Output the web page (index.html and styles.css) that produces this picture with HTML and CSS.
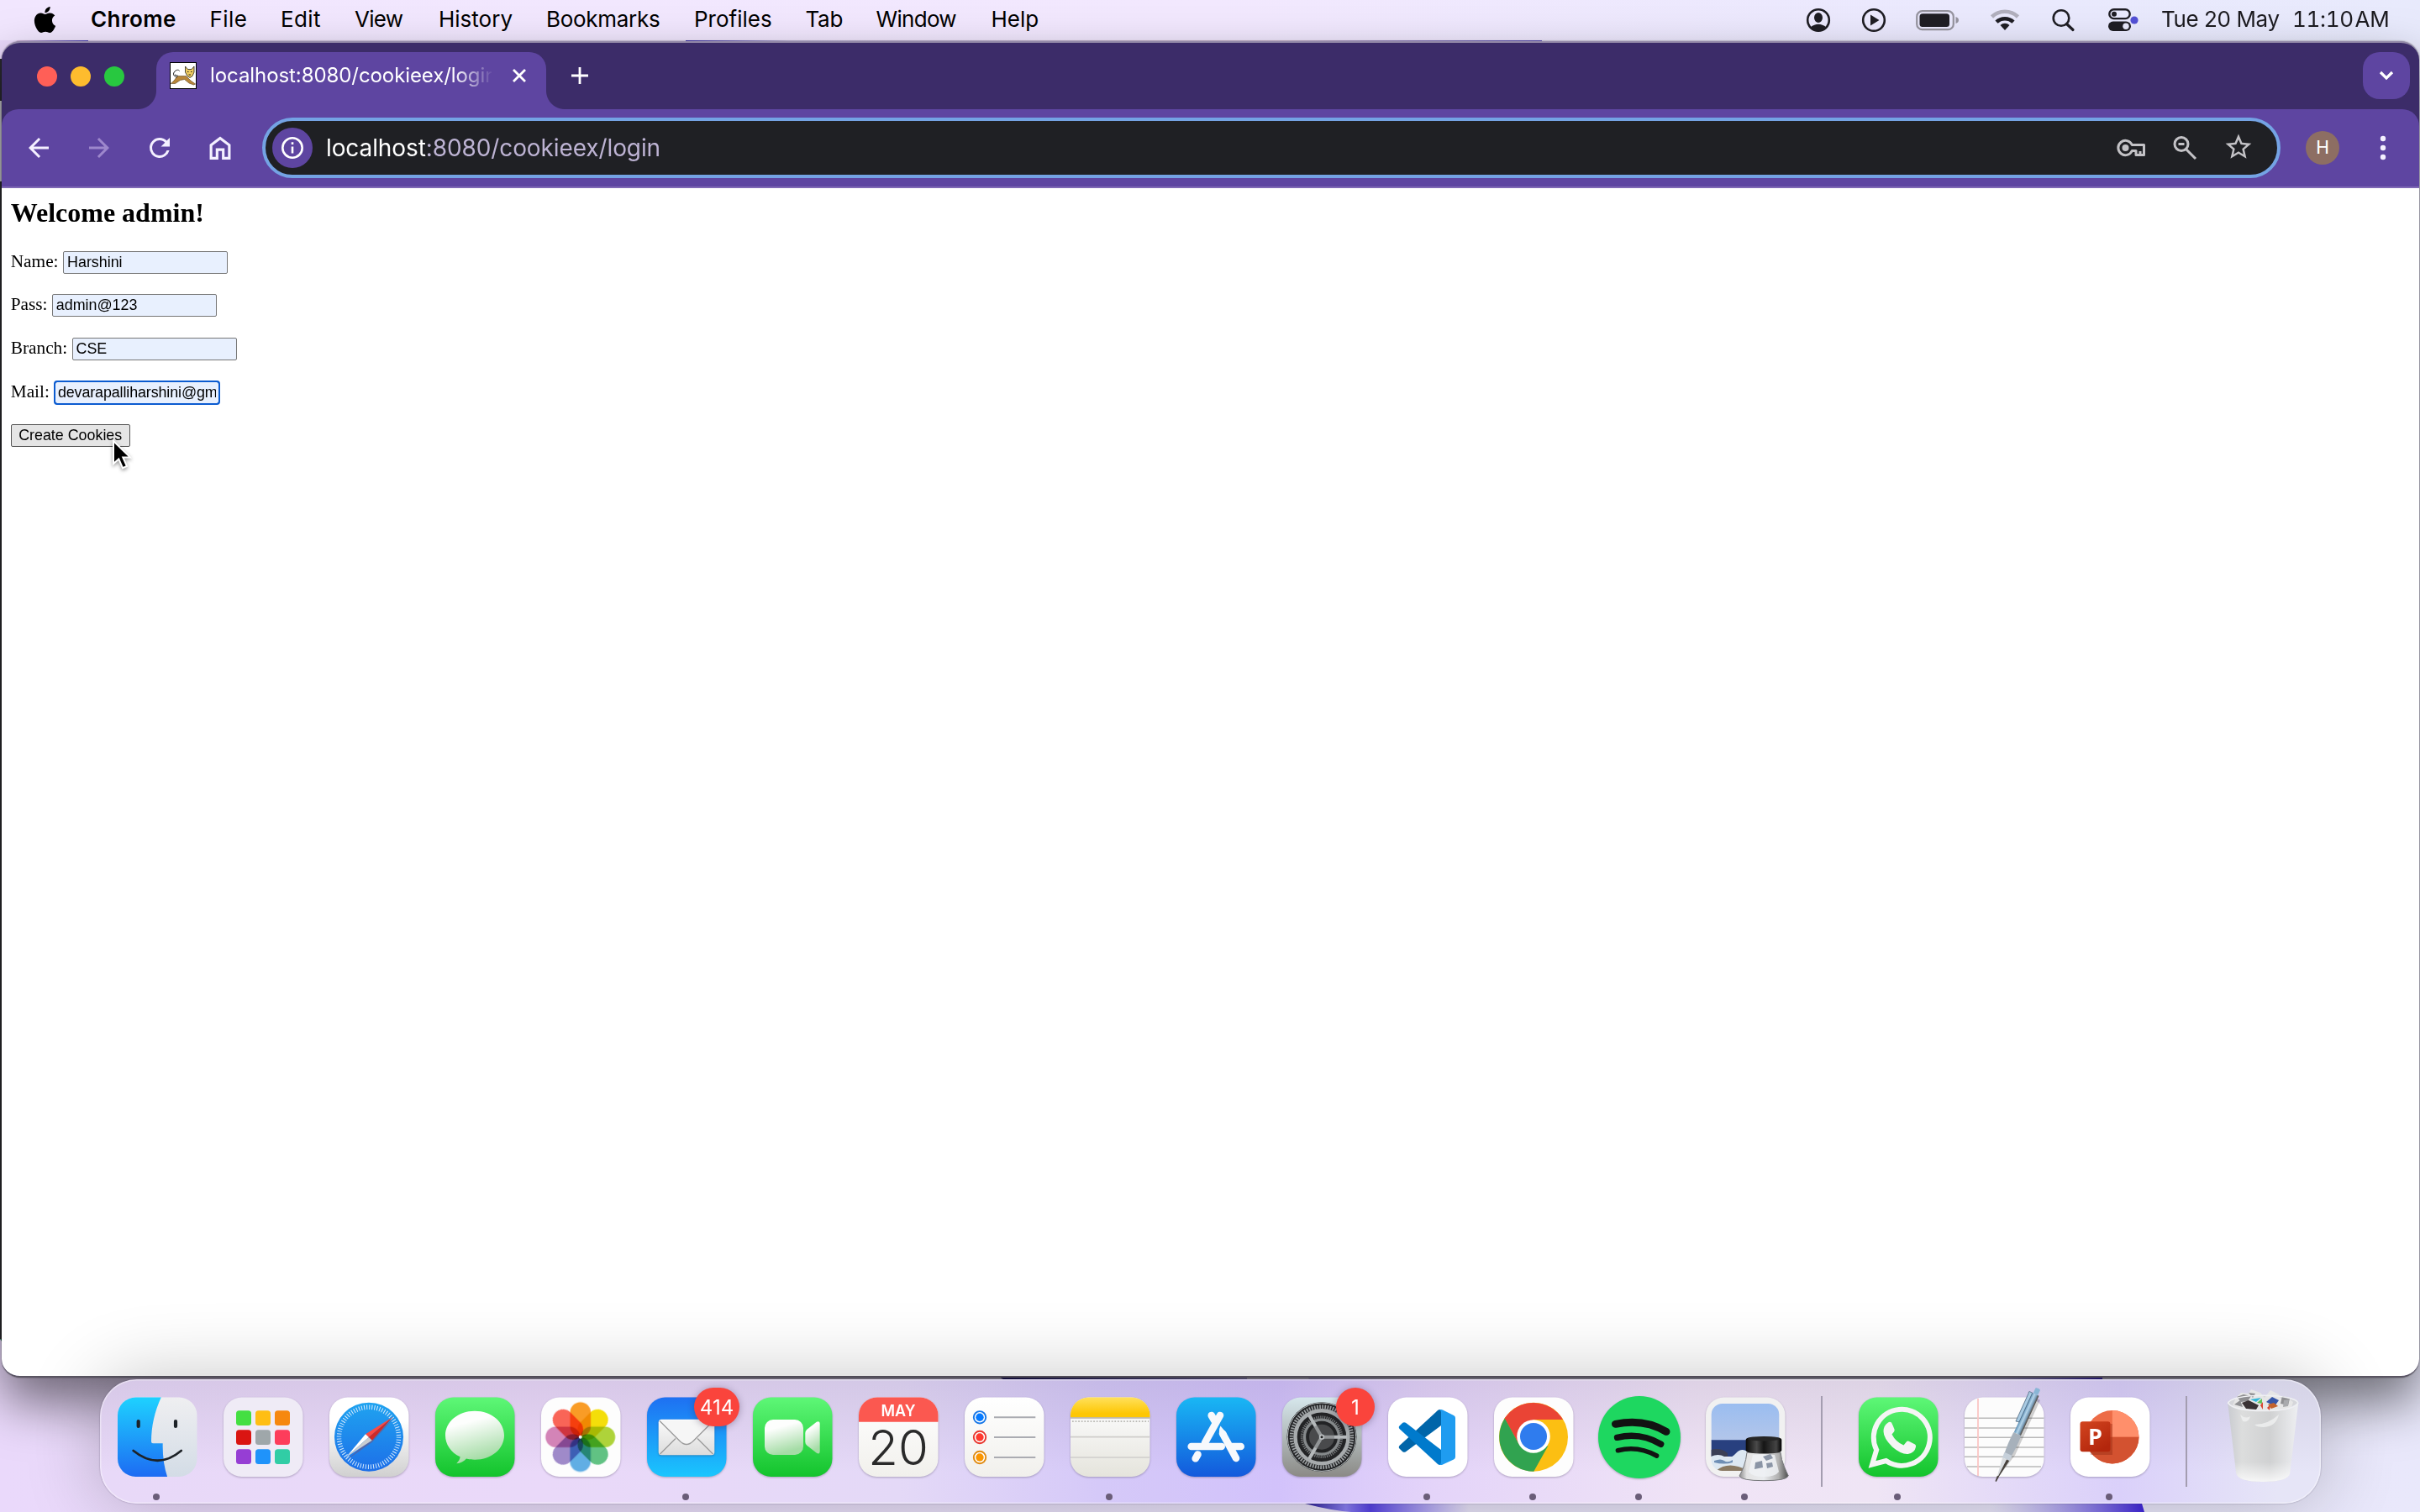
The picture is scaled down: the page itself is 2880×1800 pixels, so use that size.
FILE: index.html
```
<!DOCTYPE html>
<html lang="en">
<head>
<meta charset="utf-8">
<title>localhost:8080/cookieex/login</title>
<link rel="stylesheet" href="styles.css">
</head>
<body>
<svg class="wallpaper" viewBox="0 0 2880 1800">
  <defs>
    <linearGradient id="wp"><stop offset="0" stop-color="#ead9fb"/><stop offset=".5" stop-color="#e6dff6"/><stop offset="1" stop-color="#e9e8fb"/></linearGradient>
    <linearGradient id="w1"><stop offset="0" stop-color="#e2c2ea"/><stop offset="1" stop-color="#4a3fc4"/></linearGradient>
    <linearGradient id="w2"><stop offset="0" stop-color="#3c2fb4"/><stop offset=".12" stop-color="#c9bfe6"/><stop offset=".7" stop-color="#d9c3dd"/><stop offset="1" stop-color="#5d50c0"/></linearGradient>
    <linearGradient id="w3"><stop offset="0" stop-color="#2a1d96"/><stop offset=".25" stop-color="#8c80f4"/><stop offset=".4" stop-color="#5642e4"/><stop offset="1" stop-color="#7a68f8" stop-opacity="0"/></linearGradient>
    <linearGradient id="w4"><stop offset="0" stop-color="#9a8cf0" stop-opacity="0"/><stop offset="1" stop-color="#3f26dc"/></linearGradient>
    <linearGradient id="w5"><stop offset="0" stop-color="#1a1070"/><stop offset="1" stop-color="#4a3cc0" stop-opacity="0"/></linearGradient>
  </defs>
  <path fill="url(#wp)" d="M0 0h2880v1800H0z"/>
  <path fill="url(#w1)" d="M20 48h85v3H20z"/>
  <path fill="url(#w2)" d="M816 48h1019v3H816z"/>
  <path fill="#2a2a2e" d="M0 70h3v1524H0z"/>
  <path fill="#c9c9cb" d="M0 120h3v96H0z"/>
  <path fill="#1d6a4a" d="M0 1594h3v30q4 12 17 15l-9-30z"/>
  <path fill="url(#w3)" d="M1553 1790q30 8 55 10h140v-10z"/>
  <path fill="url(#w4)" d="M2370 1790h179l3 10h-182z"/>
  <path fill="url(#w5)" d="M1184 1636h300v6h-290zM1555 1636h120v6h-117z"/>
  <path fill="url(#w4)" d="M2330 1636h172v6h-172z"/>
</svg>

<header class="menubar">
  <svg class="apple" viewBox="0 0 24 24"><path d="M12.152 6.896c-.948 0-2.415-1.078-3.96-1.04-2.04.027-3.91 1.183-4.961 3.014-2.117 3.675-.546 9.103 1.519 12.09 1.013 1.454 2.208 3.09 3.792 3.039 1.52-.065 2.09-.987 3.935-.987 1.831 0 2.35.987 3.96.948 1.637-.026 2.676-1.48 3.676-2.948 1.156-1.688 1.636-3.325 1.662-3.415-.039-.013-3.182-1.221-3.22-4.857-.026-3.04 2.48-4.494 2.597-4.559-1.429-2.09-3.623-2.324-4.39-2.376-2-.156-3.675 1.09-4.61 1.09zM15.53 3.83c.843-1.012 1.4-2.427 1.245-3.83-1.207.052-2.662.805-3.532 1.818-.78.896-1.454 2.338-1.273 3.714 1.338.104 2.715-.688 3.559-1.701"/></svg>
  <nav class="menus">
    <span class="app-name">Chrome</span><span class="loose">File</span><span class="loose">Edit</span><span class="tight">View</span><span>History</span><span class="snug">Bookmarks</span><span>Profiles</span><span class="snug">Tab</span><span class="tight">Window</span><span>Help</span>
  </nav>
  <svg class="status" viewBox="0 0 430 48">
    <g fill="none" stroke="#1f1e24" stroke-width="2.6">
      <circle cx="24" cy="24" r="12.8"/><circle cx="90" cy="24" r="12.8"/>
      <circle cx="313" cy="21.500" r="9.300"/><path d="M319.500 28.500l7.500 7" stroke-width="3.200" stroke-linecap="round"/>
    </g>
    <path fill="#1f1e24" d="M24 15a5 6 0 0 1 0 12a5 6 0 0 1 0-12zM14.500 32.500q9.500-7.500 19 0q-9.500 9-19 0zM86 17.500l10.500 6.500-10.500 6.500z"/>
    <rect x="141.200" y="13.200" width="43.600" height="22" rx="6.500" fill="none" stroke="#96949f" stroke-width="2.200"/>
    <rect x="144.500" y="16.300" width="35.500" height="15.800" rx="3.500" fill="#1f1e24"/>
    <path fill="#96949f" d="M187.500 20q3.500 1.200 3.500 4t-3.500 4z"/>
    <g fill="none" stroke-width="4.600">
      <path stroke="#b1afbd" d="M230.500 20a22.500 22.500 0 0 1 31 0"/>
      <path stroke="#1f1e24" d="M236 26.200a14.500 14.500 0 0 1 20 0"/>
    </g>
    <path fill="#1f1e24" d="M246 36l-5.500-6a8 8 0 0 1 11 0z"/>
    <rect x="370.300" y="11.300" width="24.400" height="10.800" rx="5.400" fill="none" stroke="#1f1e24" stroke-width="2.400"/><circle cx="376" cy="16.700" r="3" fill="#1f1e24"/>
    <rect x="369" y="25.500" width="27" height="11.500" rx="5.700" fill="#1f1e24"/><circle cx="390" cy="31.200" r="3.700" fill="#e9e9fb"/>
    <circle cx="400" cy="24" r="4.600" fill="#5350d6"/>
  </svg>
  <span class="date">Tue 20 May</span><span class="time">11:10 AM</span>
</header>

<section class="window">
  <div class="tabstrip">
    <div class="lights"><i class="red"></i><i class="yellow"></i><i class="green"></i></div>
    <div class="tab">
      <svg class="favicon" viewBox="0 0 32 32"><rect x=".5" y=".5" width="31" height="31" fill="#fff" stroke="#000"/><path fill="#b8863a" stroke="#5e451c" stroke-width=".6" d="M1.500 25c4-2 5-6 8-8.500 4 0 7 0 10 0l5.500 5.500 5.500 4-2 1-5.500-2-5.500-4.500-5 1-6 4-5 0z"/><path fill="#eecb60" stroke="#222" stroke-width=".8" d="M18.500 5l3 3.500h4.500l3-3.500v7l-2 4.500-3 2-3-2-2.500-4.500z"/><path stroke="#222" fill="none" stroke-width="1" d="M9 18c-5-1-5.500-4.500-3-7S11 9 11.500 10.500M6 15l4 1.500M21 11.500h1.500m2.500 0h1.500M22.500 15h2.500"/></svg>
      <span class="tab-title">localhost:8080/cookieex/login</span>
      <svg class="tab-close" viewBox="0 0 20 20"><path d="M3 3l14 14M17 3L3 17"/></svg>
    </div>
    <svg class="new-tab" viewBox="0 0 24 24"><path d="M12 2v20M2 12h20"/></svg>
    <div class="tab-search"><svg viewBox="0 0 20 14"><path d="M3 3l7 7 7-7"/></svg></div>
  </div>

  <div class="toolbar">
    <div class="tool"><svg viewBox="0 0 24 24"><path d="M20 11H7.830l5.590-5.590L12 4l-8 8 8 8 1.410-1.410L7.830 13H20v-2z"/></svg></div>
    <div class="tool off"><svg viewBox="0 0 24 24"><path d="M4 11h12.170l-5.590-5.590L12 4l8 8-8 8-1.410-1.410L16.170 13H4v-2z"/></svg></div>
    <div class="tool"><svg viewBox="0 0 24 24"><path d="M17.650 6.350A7.958 7.958 0 0 0 12 4a8 8 0 1 0 7.730 10h-2.080A6 6 0 1 1 12 6c1.660 0 3.140.690 4.220 1.780L13 11h7V4z"/></svg></div>
    <div class="tool"><svg viewBox="0 0 24 24"><path d="M12 3L3.700 9.300V21.300h6.900v-6.800h2.800v6.800h6.900V9.300zM12 5.600l6.200 4.700v8.900h-2.700v-6.800H8.500v6.800H5.800v-8.900z"/></svg></div>
    <div class="omnibox">
      <svg class="site-info" viewBox="0 0 48 48"><circle cx="24" cy="24" r="24" fill="#5e45a1"/><circle cx="24" cy="24" r="11.700" fill="none" stroke="#fff" stroke-width="2.600"/><path stroke="#fff" stroke-width="2.600" d="M24 22.500v8M24 17.300v2.700"/></svg>
      <span class="url"><b>localhost</b>:8080/cookieex/login</span>
      <svg class="omni-icons" viewBox="0 0 166 48">
        <g fill="none" stroke="#c3c2c6" stroke-width="3">
          <path d="M22.300 20.500A8.600 8.600 0 1 0 22.300 27.500H27V32.500h9.500V20.500z" stroke-linejoin="round"/>
          <path d="M32 28v4"/>
          <circle cx="81" cy="19.500" r="8"/><path d="M86.500 25.500L98 37M77.500 19.500h7"/>
        </g>
        <circle cx="14.500" cy="24" r="4" fill="#c3c2c6"/>
        <path fill="#c3c2c6" transform="translate(130.500 4.500) scale(1.540)" d="M22 9.240l-7.190-.620L12 2 9.190 8.630 2 9.240l5.460 4.730L5.820 21 12 17.270 18.180 21l-1.630-7.030L22 9.240zM12 15.400l-3.760 2.270 1-4.280-3.320-2.880 4.380-.380L12 6.100l1.710 4.040 4.380.380-3.320 2.880 1 4.280L12 15.400z"/>
      </svg>
    </div>
    <span class="avatar">H</span>
    <svg class="kebab" viewBox="0 0 8 30"><circle cx="4" cy="4" r="3.200"/><circle cx="4" cy="15" r="3.200"/><circle cx="4" cy="26" r="3.200"/></svg>
  </div>

  <main class="page">
    <h2>Welcome admin!</h2>
    <div class="row name"><label>Name:</label><input value="Harshini"></div>
    <div class="row"><label>Pass:</label><input value="admin@123"></div>
    <div class="row"><label>Branch:</label><input value="CSE"></div>
    <div class="row mail"><label>Mail:</label><input class="focused" value="devarapalliharshini@gmail.com"></div>
    <button class="create">Create Cookies</button>
  </main>
</section>

<footer class="dock">
  <svg class="defs" width="0" height="0">
    <defs>
      <linearGradient id="blue" x2="0" y2="1"><stop offset="0" stop-color="#1ed2ff"/><stop offset="1" stop-color="#1d6bf3"/></linearGradient>
      <linearGradient id="mail" x2="0" y2="1"><stop offset="0" stop-color="#1e70f2"/><stop offset="1" stop-color="#1ac6fe"/></linearGradient>
      <linearGradient id="store" x2="0" y2="1"><stop offset="0" stop-color="#19b7f4"/><stop offset="1" stop-color="#1359dc"/></linearGradient>
      <linearGradient id="green" x2="0" y2="1"><stop offset="0" stop-color="#5ef777"/><stop offset="1" stop-color="#13c32c"/></linearGradient>
      <linearGradient id="face" x2="0" y2="1"><stop offset="0" stop-color="#efeff1"/><stop offset="1" stop-color="#d3dce6"/></linearGradient>
      <linearGradient id="white" x2="0" y2="1"><stop offset=".3" stop-color="#fff"/><stop offset="1" stop-color="#d0d0d0"/></linearGradient>
      <linearGradient id="paper" x2="0" y2="1"><stop offset="0" stop-color="#fff"/><stop offset="1" stop-color="#f1f0ec"/></linearGradient>
      <linearGradient id="note" x2="0" y2="1"><stop offset=".3" stop-color="#f7f7f6"/><stop offset="1" stop-color="#e5e4dc"/></linearGradient>
      <linearGradient id="gold" x2="0" y2="1"><stop offset="0" stop-color="#ffe15e"/><stop offset=".8" stop-color="#fdc704"/></linearGradient>
      <linearGradient id="grey" x2="0" y2="1"><stop offset="0" stop-color="#d6e7ec"/><stop offset="1" stop-color="#8b8a86"/></linearGradient>
      <linearGradient id="compass" x2="0" y2="1"><stop offset="0" stop-color="#1fa3f0"/><stop offset="1" stop-color="#1d6fe8"/></linearGradient>
      <linearGradient id="bubble" x2=".3" y2="1"><stop offset=".3" stop-color="#fdfefd"/><stop offset="1" stop-color="#a5dca6"/></linearGradient>
      <linearGradient id="env" x2="0" y2="1"><stop offset="0" stop-color="#fbfbfb"/><stop offset="1" stop-color="#dcdcdc"/></linearGradient>
      <linearGradient id="sky" x2="0" y2="1"><stop offset="0" stop-color="#9abdf0"/><stop offset="1" stop-color="#b3c6ea"/></linearGradient>
      <linearGradient id="ppt" x2=".6" y2="1"><stop offset="0" stop-color="#d2451f"/><stop offset="1" stop-color="#b3260c"/></linearGradient>
      <linearGradient id="glass"><stop offset="0" stop-color="#8a8a8a"/><stop offset=".15" stop-color="#e4e4e4"/><stop offset=".5" stop-color="#e9ebee"/><stop offset=".8" stop-color="#b0b0b0"/><stop offset="1" stop-color="#4d4d4d"/></linearGradient>
      <linearGradient id="cap"><stop offset="0" stop-color="#0a0a0a"/><stop offset=".3" stop-color="#4a4a4a"/><stop offset=".5" stop-color="#151515"/><stop offset=".85" stop-color="#444"/><stop offset="1" stop-color="#000"/></linearGradient>
      <linearGradient id="bin"><stop offset="0" stop-color="#c9cbd0"/><stop offset=".2" stop-color="#dcdddd"/><stop offset=".6" stop-color="#d0d1d2"/><stop offset="1" stop-color="#eeeff2"/></linearGradient>
      <linearGradient id="binfade" x2="0" y2="1"><stop offset=".75" stop-color="#fff" stop-opacity="0"/><stop offset="1" stop-color="#fff" stop-opacity=".8"/></linearGradient>
      <linearGradient id="pen" x1="0" y1="0" x2="1" y2="0"><stop offset="0" stop-color="#5d8fb5"/><stop offset=".4" stop-color="#b5d5ea"/><stop offset=".7" stop-color="#7ba0bd"/><stop offset="1" stop-color="#4d4238"/></linearGradient>
      <clipPath id="tile"><rect x="16" y="21.500" width="94.500" height="94.500" rx="21.500"/></clipPath>
    </defs>
  </svg>

  <div class="slot running"><svg viewBox="0 0 126 132"><g clip-path="url(#tile)"><path fill="url(#face)" d="M16 21h95v95H16z"/><path fill="url(#blue)" d="M16 21h52C60 38 56 56 56 74q0 2.300 2 2.300h11.700q-.500 22 5.500 40H16z"/></g><g fill="none" stroke="#1d2227" stroke-linecap="round"><path stroke-width="4.200" d="M40.700 50v6M85 50v6"/><path stroke-width="2.800" d="M34.700 85q29 23.500 57 0"/></g></svg></div>

  <div class="slot"><svg viewBox="0 0 126 132"><rect class="tile" x="16" y="21.500" width="94.500" height="94.500" rx="21.500" fill="#efebf6"/>
    <rect x="31" y="37.300" width="18" height="17.700" rx="3.500" fill="#44df42"/><rect x="54" y="37.300" width="18" height="17.700" rx="3.500" fill="#ffbe14"/><rect x="77" y="37.300" width="18" height="17.700" rx="3.500" fill="#f6880f"/>
    <rect x="31" y="60.300" width="18" height="17.700" rx="3.500" fill="#da1512"/><rect x="54" y="60.300" width="18" height="17.700" rx="3.500" fill="#9fa7aa"/><rect x="77" y="60.300" width="18" height="17.700" rx="3.500" fill="#fd3d5b"/>
    <rect x="31" y="83.300" width="18" height="17.700" rx="3.500" fill="#963ed4"/><rect x="54" y="83.300" width="18" height="17.700" rx="3.500" fill="#1f93fa"/><rect x="77" y="83.300" width="18" height="17.700" rx="3.500" fill="#31cda5"/></svg></div>

  <div class="slot"><svg viewBox="0 0 126 132"><rect class="tile" x="16" y="21.500" width="94.500" height="94.500" rx="21.500" fill="url(#white)"/><circle cx="63" cy="68.700" r="41" fill="url(#compass)"/><circle cx="63" cy="68.700" r="35.500" fill="none" stroke="#d5eafd" stroke-width="5.500" stroke-dasharray="1 2.098"/><path fill="#a33" opacity=".35" d="M92 47L66.700 75 38 95z"/><path fill="#fb4a44" d="M91.700 44.700L59 65.300l3.800 3.700z"/><path fill="#d02a26" d="M91.700 44.700L62.800 69l3.900 3.700z"/><path fill="#fff" d="M35.700 93L59 65.300l3.800 3.700z"/><path fill="#c9ccd0" d="M35.700 93l27.100-24 3.900 3.700z"/></svg></div>

  <div class="slot"><svg viewBox="0 0 126 132"><rect class="tile" x="16" y="21.500" width="94.500" height="94.500" rx="21.500" fill="url(#green)"/><path fill="url(#bubble)" d="M63 37.700c20 0 35 13 35 29s-15 29-35 29c-4 0-7-.400-10-1.200-3 3.500-7 5.500-11.700 5.800 2.500-2.500 4-5 4.300-8C34.500 87 28 77.500 28 66.700c0-16 15-29 35-29z"/></svg></div>

  <div class="slot"><svg viewBox="0 0 126 132"><rect class="tile" x="16" y="21.500" width="94.500" height="94.500" rx="21.500" fill="#fdfdfd"/><g class="petals" transform="translate(62.700 68.700)">
    <rect x="-12.300" y="-41.500" width="24.600" height="41" rx="12.300" fill="#fb9d26"/>
    <rect x="-12.300" y="-41.500" width="24.600" height="41" rx="12.300" fill="#f6e00a" transform="rotate(45)"/>
    <rect x="-12.300" y="-41.500" width="24.600" height="41" rx="12.300" fill="#b0d53a" transform="rotate(90)"/>
    <rect x="-12.300" y="-41.500" width="24.600" height="41" rx="12.300" fill="#62c484" transform="rotate(135)"/>
    <rect x="-12.300" y="-41.500" width="24.600" height="41" rx="12.300" fill="#62b0e6" transform="rotate(180)"/>
    <rect x="-12.300" y="-41.500" width="24.600" height="41" rx="12.300" fill="#a08bcb" transform="rotate(225)"/>
    <rect x="-12.300" y="-41.500" width="24.600" height="41" rx="12.300" fill="#d585b9" transform="rotate(270)"/>
    <rect x="-12.300" y="-41.500" width="24.600" height="41" rx="12.300" fill="#fb6658" transform="rotate(315)"/></g><circle cx="62.700" cy="68.700" r="2" fill="#eee"/></svg></div>

  <div class="slot running"><svg viewBox="0 0 126 132"><rect class="tile" x="16" y="21.500" width="94.500" height="94.500" rx="21.500" fill="url(#mail)"/><rect class="tile" x="29.700" y="47.700" width="66.600" height="42.600" rx="3.500" fill="url(#env)"/><g fill="none" stroke="#9b9b9b" stroke-width="1.300"><path d="M31.500 89L50 70.500M94.500 89L76 70.500"/><path fill="#f6f6f6" d="M31 49.500L55 73.500q8 8 16 0L95 49.500"/></g></svg><span class="badge">414</span></div>

  <div class="slot"><svg viewBox="0 0 126 132"><rect class="tile" x="16" y="21.500" width="94.500" height="94.500" rx="21.500" fill="url(#green)"/><rect x="30" y="48" width="46" height="42" rx="10" fill="url(#bubble)"/><path fill="url(#bubble)" d="M78.300 64q0-2.500 2-4.200l11.500-9q3.900-2 3.900 2v33q0 4-3.900 2l-11.500-9q-2-1.700-2-4.200z"/></svg></div>

  <div class="slot"><svg viewBox="0 0 126 132"><rect class="tile" x="16" y="21.500" width="94.500" height="94.500" rx="21.500" fill="url(#paper)"/><path clip-path="url(#tile)" fill="#fb5850" d="M16 21h95v29.700H16z"/><text x="63" y="44.200" text-anchor="middle" textLength="41" lengthAdjust="spacingAndGlyphs" class="month">MAY</text><text x="63" y="102" text-anchor="middle" class="day">20</text></svg></div>

  <div class="slot"><svg viewBox="0 0 126 132"><rect class="tile" x="16" y="21.500" width="94.500" height="94.500" rx="21.500" fill="url(#paper)"/><path stroke="#abacb2" stroke-width="2" d="M51 45.300h49.300M51 69h49.300M51 93h49.300"/><g fill="#fff" stroke-width="1.900"><circle cx="34" cy="45.300" r="7.200" stroke="#1677e8"/><circle cx="34" cy="69" r="7.200" stroke="#e8352d"/><circle cx="34" cy="93" r="7.200" stroke="#e08a10"/></g><circle cx="34" cy="45.300" r="4.700" fill="#067aff"/><circle cx="34" cy="69" r="4.700" fill="#ff3a2f"/><circle cx="34" cy="93" r="4.700" fill="#fa9500"/></svg></div>

  <div class="slot running"><svg viewBox="0 0 126 132"><rect class="tile" x="16" y="21.500" width="94.500" height="94.500" rx="21.500" fill="url(#note)"/><path clip-path="url(#tile)" fill="url(#gold)" d="M16 21h95v24.500H16z"/><path stroke="#b3afa5" stroke-width="1.500" d="M16 46h94.500"/><path stroke="#b9b8b4" stroke-width="1.700" stroke-dasharray="1.700 1.900" d="M18 50.200h91"/><path stroke="#cfcecb" stroke-width="1.700" d="M16 68.700h94.500M16 93h94.500"/></svg></div>

  <div class="slot"><svg viewBox="0 0 126 132"><rect class="tile" x="16" y="21.500" width="94.500" height="94.500" rx="21.500" fill="url(#store)"/><g fill="none" stroke="#f7f9fc" stroke-width="8.600" stroke-linecap="round"><path d="M57.700 43l3.500 6"/><path d="M68 43L50 75.500" /><path d="M41.500 89.500l-2.800 4.800M33.700 80h36M80 80h12.700M71 64.500L87 94"/></g><path fill="#f7f9fc" d="M68.500 55.500l7.500 9-7 4q-4-6-.500-13z"/></svg></div>

  <div class="slot"><svg viewBox="0 0 126 132"><rect class="tile" x="16" y="21.500" width="94.500" height="94.500" rx="21.500" fill="url(#grey)"/><circle cx="63" cy="68.700" r="41.500" fill="#222325"/><g fill="none"><circle cx="63" cy="68.700" r="36" stroke="#9b9fa1" stroke-width="4.500" stroke-dasharray="1.700 1.442"/><circle cx="63" cy="68.700" r="31.500" stroke="#a7abad" stroke-width="4.500"/><circle cx="63" cy="68.700" r="23.500" stroke="#777a7c" stroke-width="3.500" stroke-dasharray="1.200 1.260"/><circle cx="63" cy="68.700" r="20.500" stroke="#85898b" stroke-width="3.200"/><circle cx="63" cy="68.700" r="40.700" stroke="#b5bbbd" stroke-width="1"/><path stroke="#b4b8ba" stroke-width="4" d="M63 68.700h30M63 68.700l-15-26M63 68.700l-15 26"/></g><circle cx="63" cy="68.700" r="15" fill="#6f7173" opacity=".5"/><circle cx="63" cy="68.700" r="3.200" fill="#babec0"/><circle cx="63" cy="68.700" r="1.500" fill="#222"/></svg><span class="badge single">1</span></div>

  <div class="slot running"><svg viewBox="0 0 126 132"><rect class="tile" x="16" y="21.500" width="94.500" height="94.500" rx="21.500" fill="#fff"/><path fill="#0065a9" d="M79 36.300q-2-1-4 .700L29.500 79q-1.500 2 0 3.600l3.800 3.600q1.700 1.300 3.700 0L79 55z"/><path fill="#007acc" d="M79 101.700q-2 1-4-.700L29.500 59q-1.500-2 0-3.600l3.800-3.600q1.700-1.300 3.700 0L79 84z"/><path fill="#1f9cf0" d="M77 101.500q2 1 4 0L94 95.500q2-1 2-3V46q0-2-2-3L81 36.500q-2.500-1-4 .500 2 0 2 2v60q0 2-2 2.500z"/></svg></div>

  <div class="slot running"><svg viewBox="0 0 126 132"><rect class="tile" x="16" y="21.500" width="94.500" height="94.500" rx="21.500" fill="#fdfdfd"/><circle cx="63" cy="68.700" r="41" fill="#fcbf12"/><path fill="#ea4435" d="M28.500 46.500A41 41 0 0 1 98 48H63L45.500 77z"/><path fill="#31a350" d="M28.800 46.500A41 41 0 0 0 63.300 109.700L80.500 79 63 87.500 45.500 77z"/><circle cx="63" cy="68" r="19.800" fill="#fff"/><circle cx="63" cy="68" r="16" fill="#2f7cee"/></svg></div>

  <div class="slot running"><svg viewBox="0 0 126 132"><circle class="tile" cx="63" cy="69" r="49" fill="#1ed760"/><g fill="none" stroke="#121212" stroke-linecap="round"><path stroke-width="9" d="M34.500 53.300q34-7 60.500 9"/><path stroke-width="7.500" d="M36.600 69.300q28-6.500 52 8"/><path stroke-width="5.700" d="M37.500 84.700q24-6 46 6.300"/></g></svg></div>

  <div class="slot running"><svg viewBox="0 0 126 132"><rect class="tile" x="16" y="21.500" width="94.500" height="94.500" rx="21.500" fill="#f1f1f1"/><clipPath id="photo"><rect x="22.700" y="29" width="80.600" height="80" rx="13"/></clipPath><g clip-path="url(#photo)"><path fill="url(#sky)" d="M22 29h82v44H22z"/><path fill="#28407f" d="M22 72.300h82V92H22z"/><path fill="#3b3f55" d="M22 84q12-3 20 4v4H22z"/><path fill="#dde8f2" d="M22 92q9-4 16 0t14-4 16 0 36 2v22H22z"/><path fill="#6f8fb5" d="M26 97q8-3 12 0t10-1v3q-10 3-22 0z"/><path fill="#8a7a63" d="M28 109q10-8 22-6 12 2 16 7z"/></g><path fill="url(#glass)" stroke="#77797c" stroke-width="1" d="M65 87h40q1 9 4 16t5.300 12q-2 5.700-29.300 5.700T56 115q3-5 5.500-12T65 87z"/><path fill="#eef1f5" opacity=".85" d="M72 90h26l5 20q-4 6-18 6t-18-6z"/><path fill="#8b95a6" d="M84 92l9-3 3 5-8 3zM75 99l8-2 1 8-10 2zM88 100l7-1 1 5-7 2z"/><path fill="url(#cap)" d="M63.700 72q0-4 21.300-4t21.300 4v12.500q0 4-21.300 4t-21.300-4z"/><ellipse cx="85" cy="71" rx="19" ry="2.400" fill="#262626"/></svg></div>

  <div class="sep"></div>

  <div class="slot running"><svg viewBox="0 0 126 132"><rect class="tile" x="16" y="21.500" width="94.500" height="94.500" rx="21.500" fill="url(#green)"/><path fill="none" stroke="#f5f5f5" stroke-width="6" d="M32 101.500l5.200-17.500a33.500 33.500 0 1 1 11.300 13z"/><path fill="#f5f5f5" d="M51 51.500q2-1.600 4 0 1.300 2.500 3.500 8 .5 1.500-.5 3l-2.500 3q4.500 9 14 13l3.500-4.200q1-1.300 2.700-.5l7.300 3.700q1.500 1 1 3-1.500 7.500-9.500 8.500-8 .5-18.500-8.500-10.500-10.500-10.500-18.500 0-7 5.500-10.500z"/></svg></div>

  <div class="slot"><svg viewBox="0 0 126 132"><rect class="tile" x="16" y="21.500" width="94.500" height="94.500" rx="21.500" fill="#fcfcfc"/><path stroke="#b9b9b9" stroke-width="1.600" d="M16 46.300h94.500M16 58h94.500M16 69.300h94.500M16 81h94.500M16 92.300h94.500M19 104h88"/><path stroke="#fbc6c4" stroke-width="1.800" d="M32 23v92"/><g transform="translate(78 67) rotate(24.500)"><path fill="#000" opacity=".18" d="M2-50h6v72l-7 30z"/><path fill="url(#pen)" d="M-4.500-54h9v52h-9z"/><path fill="#8ab6d6" d="M-3-61q3-2 6 0v7h-6z"/><path fill="#a9cbe3" stroke="#35506b" stroke-width=".6" d="M-8-52q-1-1 0-2h4v38l-4 1z"/><path fill="#a7b1bb" d="M-5-2H5q1 16-1 30h-8q-2-14-1-30z"/><path fill="#c6d0da" d="M-5 24H5l-.5 7h-9z"/><path fill="#dadde0" d="M-4.500 31h9L1 53h-2z"/><path fill="#47413c" d="M1 31h3.500L1 53h-1zM-1.200 53h2.400l-.5 7h-1.400z"/></g></svg></div>

  <div class="slot running"><svg viewBox="0 0 126 132"><rect class="tile" x="16" y="21.500" width="94.500" height="94.500" rx="21.500" fill="#fff"/><circle cx="65.800" cy="68.700" r="31.700" fill="#ed6c47"/><path fill="#ff8f6b" d="M65.800 37a31.700 31.700 0 0 1 31.700 31.700H65.800z"/><path fill="#d35230" d="M34.100 68.700a31.700 31.700 0 0 0 63.400 0z"/><path fill="#7c1b08" opacity=".3" d="M36 53h30v37H40z"/><rect x="27.500" y="50.300" width="36" height="36" rx="3" fill="url(#ppt)"/><text x="45.600" y="78" text-anchor="middle" class="ppt">P</text></svg></div>

  <div class="sep"></div>

  <div class="slot"><svg viewBox="0 0 126 132"><ellipse cx="63" cy="27.500" rx="41" ry="8.500" fill="#d5d6da"/><path fill="#e6e6e6" d="M27 31l4-9 6-6 9 1 3-5 11 4 5 6 7-9 10 5 3 6 6-3 8 6-2 7-10 6-24 2-26-4z"/><path fill="#8f8f92" d="M32 21l8-3 9 2-4 6-8 1zM86 20l9 3-2 8-9-2zM29 30l7-5 3 8zM46 16l8 1-3 5z"/><path fill="#3a3234" d="M38 28l8-3 12 6-3 5-12-1z"/><path fill="#33b7d8" d="M48 24l13-2-6 5z"/><path fill="#5fc25a" d="M56 28l6-5v6z"/><path fill="#d8452f" d="M60 31l3-4v9zM68 34l4-4-1 7z"/><path fill="#3656a8" d="M67 27l7-6 8 4-5 7z"/><path fill="#c2622c" d="M69 30l7-2 5 4-8 3z"/><path fill="#a9aaad" d="M88 25l6-1-1 8-6 1z"/><path fill="url(#bin)" d="M21.200 28q6 9.500 42 9.500t42-9.500l-10 84q-2 10-32 10t-32-10z"/><path fill="url(#binfade)" d="M21.200 28q6 9.500 42 9.500t42-9.500l-10 84q-2 10-32 10t-32-10z"/><path fill="none" stroke="#eff0f3" stroke-width="1.500" d="M21.500 29C22 16 104 16 105 29M21.500 28q6 9.500 42 9.500t41.500-9.500"/><path fill="#f0f1f1" opacity=".8" d="M36 42q6 6 12 2-2 8-9 6zM53 54q16 0 29-12-3 14-18 15-8 0-11-3z"/></svg></div>
</footer>

<svg class="cursor" viewBox="0 0 24 38"><path d="M2 2v27l6.300-5.600 4.700 10.800 5-2.200-4.700-10.600h8.500z"/></svg>
</body>
</html>
```
FILE: styles.css
```
* { box-sizing: border-box; }
body {
  margin: 0;
  width: 2880px;
  height: 1800px;
  overflow: hidden;
  position: relative;
  font-family: Inter, sans-serif;
  display: flex;
  flex-direction: column;
}
svg { display: block; flex: none; }
.wallpaper { position: absolute; inset: 0; width: 2880px; height: 1800px; z-index: -1; }

/* Menu bar */
.menubar {
  height: 48px;
  flex: none;
  display: flex;
  align-items: center;
  padding-left: 38px;
  background: linear-gradient(90deg, #f1e6fe, #f2e8fe 50%, #e9e9fd 85%, #e8eafc);
  font-size: 26px;
  line-height: 46px;
  color: #000;
}
.menubar span { height: 48px; white-space: nowrap; }
.apple { width: 31px; height: 31px; margin-top: -2px; }
.menus {
  display: grid;
  width: 1300px;
  margin-left: 39px;
  grid-template-columns: 141.500px 84.500px 88px 100px 128px 176px 132.500px 84px 137px auto;
}
.app-name { font-weight: 600; letter-spacing: .4px; }
.loose { letter-spacing: .4px; }
.snug { letter-spacing: -.3px; }
.tight { letter-spacing: -.7px; }
.status { width: 430px; height: 48px; margin-left: 732px; }
.date { width: 156px; margin-left: 2px; letter-spacing: -.4px; color: #1c1b20; }
.time { font-feature-settings: "tnum"; letter-spacing: -.3px; word-spacing: -5px; color: #1c1b20; }

/* Browser window */
.window {
  width: 2877px;
  height: 1591px;
  flex: none;
  margin: 1px 0 0 2px;
  border-top: 2px solid #9389a8;
  border-bottom: 2px solid #5a5562;
  border-radius: 22px;
  background: #3c2c69;
  overflow: hidden;
  box-shadow: 0 30px 60px rgba(0, 0, 0, .52), 0 0 2px rgba(0, 0, 0, .5);
}
.tabstrip { height: 79px; display: flex; align-items: flex-start; padding: 11px 11px 0 42px; }
.lights { display: flex; gap: 16px; margin-top: 17px; }
.lights i { width: 24px; height: 24px; border-radius: 50%; }
.lights .red { background: #ff5f57; }
.lights .yellow { background: #febc2e; }
.lights .green { background: #28c840; }
.tab {
  position: relative;
  width: 464px;
  height: 68px;
  margin-left: 38px;
  padding: 0 22px 12px 16px;
  display: flex;
  align-items: center;
  border-radius: 20px 20px 0 0;
  background: #5e45a1;
}
.tab::before, .tab::after {
  content: "";
  position: absolute;
  bottom: 0;
  width: 22px;
  height: 22px;
}
.tab::before { left: -22px; background: radial-gradient(circle at 0 0, transparent 21.500px, #5e45a1 22.500px); }
.tab::after { right: -22px; background: radial-gradient(circle at 100% 0, transparent 21.500px, #5e45a1 22.500px); }
.favicon { width: 32px; height: 32px; }
.tab-title {
  width: 335px;
  margin-left: 16px;
  overflow: hidden;
  white-space: nowrap;
  font-size: 24px;
  line-height: 36px;
  letter-spacing: -.08px;
  color: #fff;
  -webkit-mask-image: linear-gradient(90deg, #000 290px, transparent 338px);
  mask-image: linear-gradient(90deg, #000 290px, transparent 338px);
}
.tab-close { width: 20px; height: 20px; margin-left: 23px; }
.tab-close path, .new-tab path, .tab-search path { fill: none; stroke: #fff; stroke-width: 2.800; }
.new-tab { width: 24px; height: 24px; margin: 16px 0 0 28px; }
.tab-search {
  width: 56px;
  height: 56px;
  margin-left: auto;
  border-radius: 20px;
  background: #5e45a1;
  display: grid;
  place-items: center;
}
.tab-search svg { width: 20px; height: 14px; }
.tab-search path { stroke-width: 3.200; }

.toolbar {
  height: 94px;
  display: flex;
  align-items: center;
  padding-left: 8px;
  background: #5e45a1;
  border-bottom: 2px solid #7f68b5;
  border-radius: 20px 20px 0 0;
}
.tool { width: 72px; display: grid; place-items: center; }
.tool svg { width: 36px; height: 36px; fill: #f4f0ff; }
.tool.off svg { fill: #9d87cc; }
.omnibox {
  width: 2402px;
  height: 72px;
  margin-left: 14px;
  padding: 0 29px 0 8px;
  display: flex;
  align-items: center;
  border: 4px solid #74a3e4;
  border-radius: 36px;
  background: #1f2024;
}
.site-info { width: 48px; height: 48px; }
.url { margin-left: 16px; font-size: 28px; line-height: 40px; letter-spacing: -.1px; color: #bdb3d3; }
.url b { font-weight: 400; color: #fff; }
.omni-icons { width: 166px; height: 48px; margin-left: auto; }
.avatar {
  width: 40px;
  height: 40px;
  margin-left: 30px;
  border-radius: 50%;
  background: #8d6e63;
  color: #fff;
  font: 22px/40px Roboto, sans-serif;
  text-align: center;
}
.kebab { width: 8px; height: 30px; margin-left: 48px; fill: #f4f0ff; }

/* Page */
.page { height: 1414px; background: #fff; padding: 11px 0 0 10.700px; color: #000; }
.page h2 { margin: 0 0 27.500px; font: bold 32px/36px "Liberation Serif", serif; }
.row { display: flex; align-items: flex-start; height: 27.300px; margin-bottom: 24.400px; }
.row label { font: 21.330px/24.500px "Liberation Serif", serif; margin-right: 5.300px; }
.row.name label { margin-right: 5.500px; }
.row.mail label { margin-right: 6px; }
.row input {
  width: 196px;
  height: 27.300px;
  padding: 0 4px;
  border: 1px solid #767676;
  border-radius: 2px;
  background: #e8f0fe;
  color: #000;
  font: 17.870px "Liberation Sans", sans-serif;
}
.row input.focused { padding: 0 3px; outline: 2px solid #0b5bd0; outline-offset: -1px; border-color: #0b5bd0; border-radius: 3px; letter-spacing: -.1px; }
.create {
  display: block;
  width: 142px;
  height: 27px;
  padding: 0;
  border: 1px solid #555;
  border-radius: 2px;
  background: #e5e5e5;
  color: #000;
  font: 17.870px "Liberation Sans", sans-serif;
}
.cursor { position: absolute; left: 133px; top: 523px; width: 24px; height: 38px; filter: drop-shadow(0 2px 2px rgba(0, 0, 0, .4)); }
.cursor path { fill: #000; stroke: #fff; stroke-width: 2; }

/* Dock */
.dock {
  width: 2643px;
  height: 148px;
  flex: none;
  margin: 2px 0 0 119px;
  padding: 0 5px;
  display: flex;
  position: relative;
  border-radius: 44px;
  background:
    linear-gradient(rgba(60, 50, 80, .1), rgba(60, 50, 80, 0) 75%),
    linear-gradient(90deg, #e8d9f8, #ead9f9 20%, #e4d9f7 36%, #d5c9f8 45%, #d2c2fb 53%, #e4d4f9 60%, #f0e4f6 72%, #efe5f5 80%, #dad0fa 91%, #e6e5f7 98%);
  box-shadow: inset 0 0 0 1.500px rgba(255, 255, 255, .4), 0 0 2px rgba(60, 50, 80, .5), 0 0 90px rgba(0, 0, 0, .24);
}
.defs { position: absolute; }
.slot { width: 126px; flex: none; position: relative; }
.slot > svg { width: 126px; height: 132px; }
.running::after {
  content: "";
  display: block;
  width: 8px;
  height: 8px;
  margin: 4px 0 0 58px;
  border-radius: 50%;
  background: #6a5d78;
}
.tile { filter: drop-shadow(0 1px 1px rgba(40, 30, 60, .3)); }
.petals rect { mix-blend-mode: multiply; }
.sep { width: 56px; height: 108px; margin-top: 20px; flex: none; background: linear-gradient(#a49db0, #a49db0) center / 2px 100% no-repeat; }
.badge {
  position: absolute;
  left: 72px;
  top: 10px;
  width: 54px;
  height: 46px;
  border-radius: 23px;
  background: #fa443c;
  color: #fff;
  font-size: 24px;
  line-height: 47px;
  text-align: center;
  box-shadow: 0 1px 8px rgba(40, 30, 60, .35);
}
.badge.single { left: 80px; width: 46px; }
.month { font: 600 19px Inter, sans-serif; fill: #fff; }
.day { font: 300 58px Inter, sans-serif; fill: #2a2a2a; }
.ppt { font: bold 27px "Open Sans", sans-serif; fill: #fff; }
```
